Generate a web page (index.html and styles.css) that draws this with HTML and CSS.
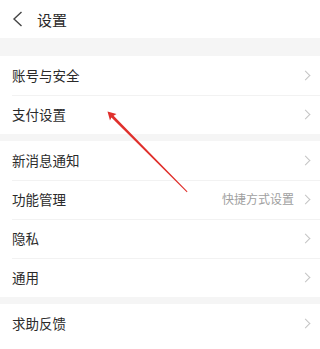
FILE: index.html
```html
<!DOCTYPE html>
<html lang="zh">
<head>
    <meta charset="UTF-8">
    <meta name="viewport" content="width=device-width, initial-scale=1.0">
    <title>设置</title>

    <link rel="stylesheet" href="styles.css">

</head>
<body>

    <div id="wrapper">

        <div class="header">
            <svg class="back" width="11" height="16" viewBox="0 0 11 16">
                <path d="M9.5 1 L2 8 L9.5 15" fill="none" stroke="#444" stroke-width="1.4"/>
            </svg>
            <span class="title">设置</span>
        </div>

        <div class="band band_top"></div>

        <div class="group">
            <div class="row"><span class="label">账号与安全</span><span class="chevron"></span></div>
            <div class="row"><span class="label">支付设置</span><span class="chevron"></span></div>
        </div>

        <div class="band"></div>

        <div class="group">
            <div class="row"><span class="label">新消息通知</span><span class="chevron"></span></div>
            <div class="row"><span class="label">功能管理</span><span class="hint">快捷方式设置</span><span class="chevron"></span></div>
            <div class="row"><span class="label">隐私</span><span class="chevron"></span></div>
            <div class="row"><span class="label">通用</span><span class="chevron"></span></div>
        </div>

        <div class="band"></div>

        <div class="group">
            <div class="row"><span class="label">求助反馈</span><span class="chevron"></span></div>
        </div>

        <!-- annotation arrow drawn over the list -->
        <svg class="pointer" width="320" height="349" viewBox="0 0 320 349">
            <polygon points="107.5,111.5 116.5,114 113.6,115.8 187.5,191.5 186.8,192.2 111.4,117.6 110,120.5" fill="#e0302c"/>
        </svg>

    </div>

</body>
</html>
```

FILE: styles.css
```css
*{
    font-family: "Noto Sans CJK SC", "Noto Sans", sans-serif;
    box-sizing: border-box;
}

body{
    margin: 0;
    padding: 0;
    background: #ffffff;
}

#wrapper{
    position: relative;
    width: 320px;
    height: 349px;
    overflow: hidden;
}

.header{
    height: 38px;
    display: flex;
    align-items: center;
    padding-left: 12px;
    gap: 14px;
}

.back{
    display: block;
}

.title{
    font-size: 15px;
    color: #2a2a2a;
}

.band{
    height: 7px;
    background: #f5f5f5;
}

.band_top{
    height: 18px;
}

.row{
    height: 39px;
    display: flex;
    align-items: center;
    padding: 0 8px 2px 12px;
    position: relative;
}

.row + .row::before{
    content: "";
    position: absolute;
    left: 12px;
    right: 0;
    top: 0;
    border-top: 1px solid #f2f2f2;
}

.label{
    flex: 1;
    font-size: 13.5px;
    color: #2a2a2a;
}

.hint{
    font-size: 12px;
    color: #a0a0a0;
    margin-right: 8px;
}

.chevron{
    width: 7px;
    height: 7px;
    border-top: 1px solid #c4c4c4;
    border-right: 1px solid #c4c4c4;
    transform: rotate(45deg);
    margin-right: 3px;
    margin-top: 2px;
}

.pointer{
    position: absolute;
    left: 0;
    top: 0;
    pointer-events: none;
}
```
